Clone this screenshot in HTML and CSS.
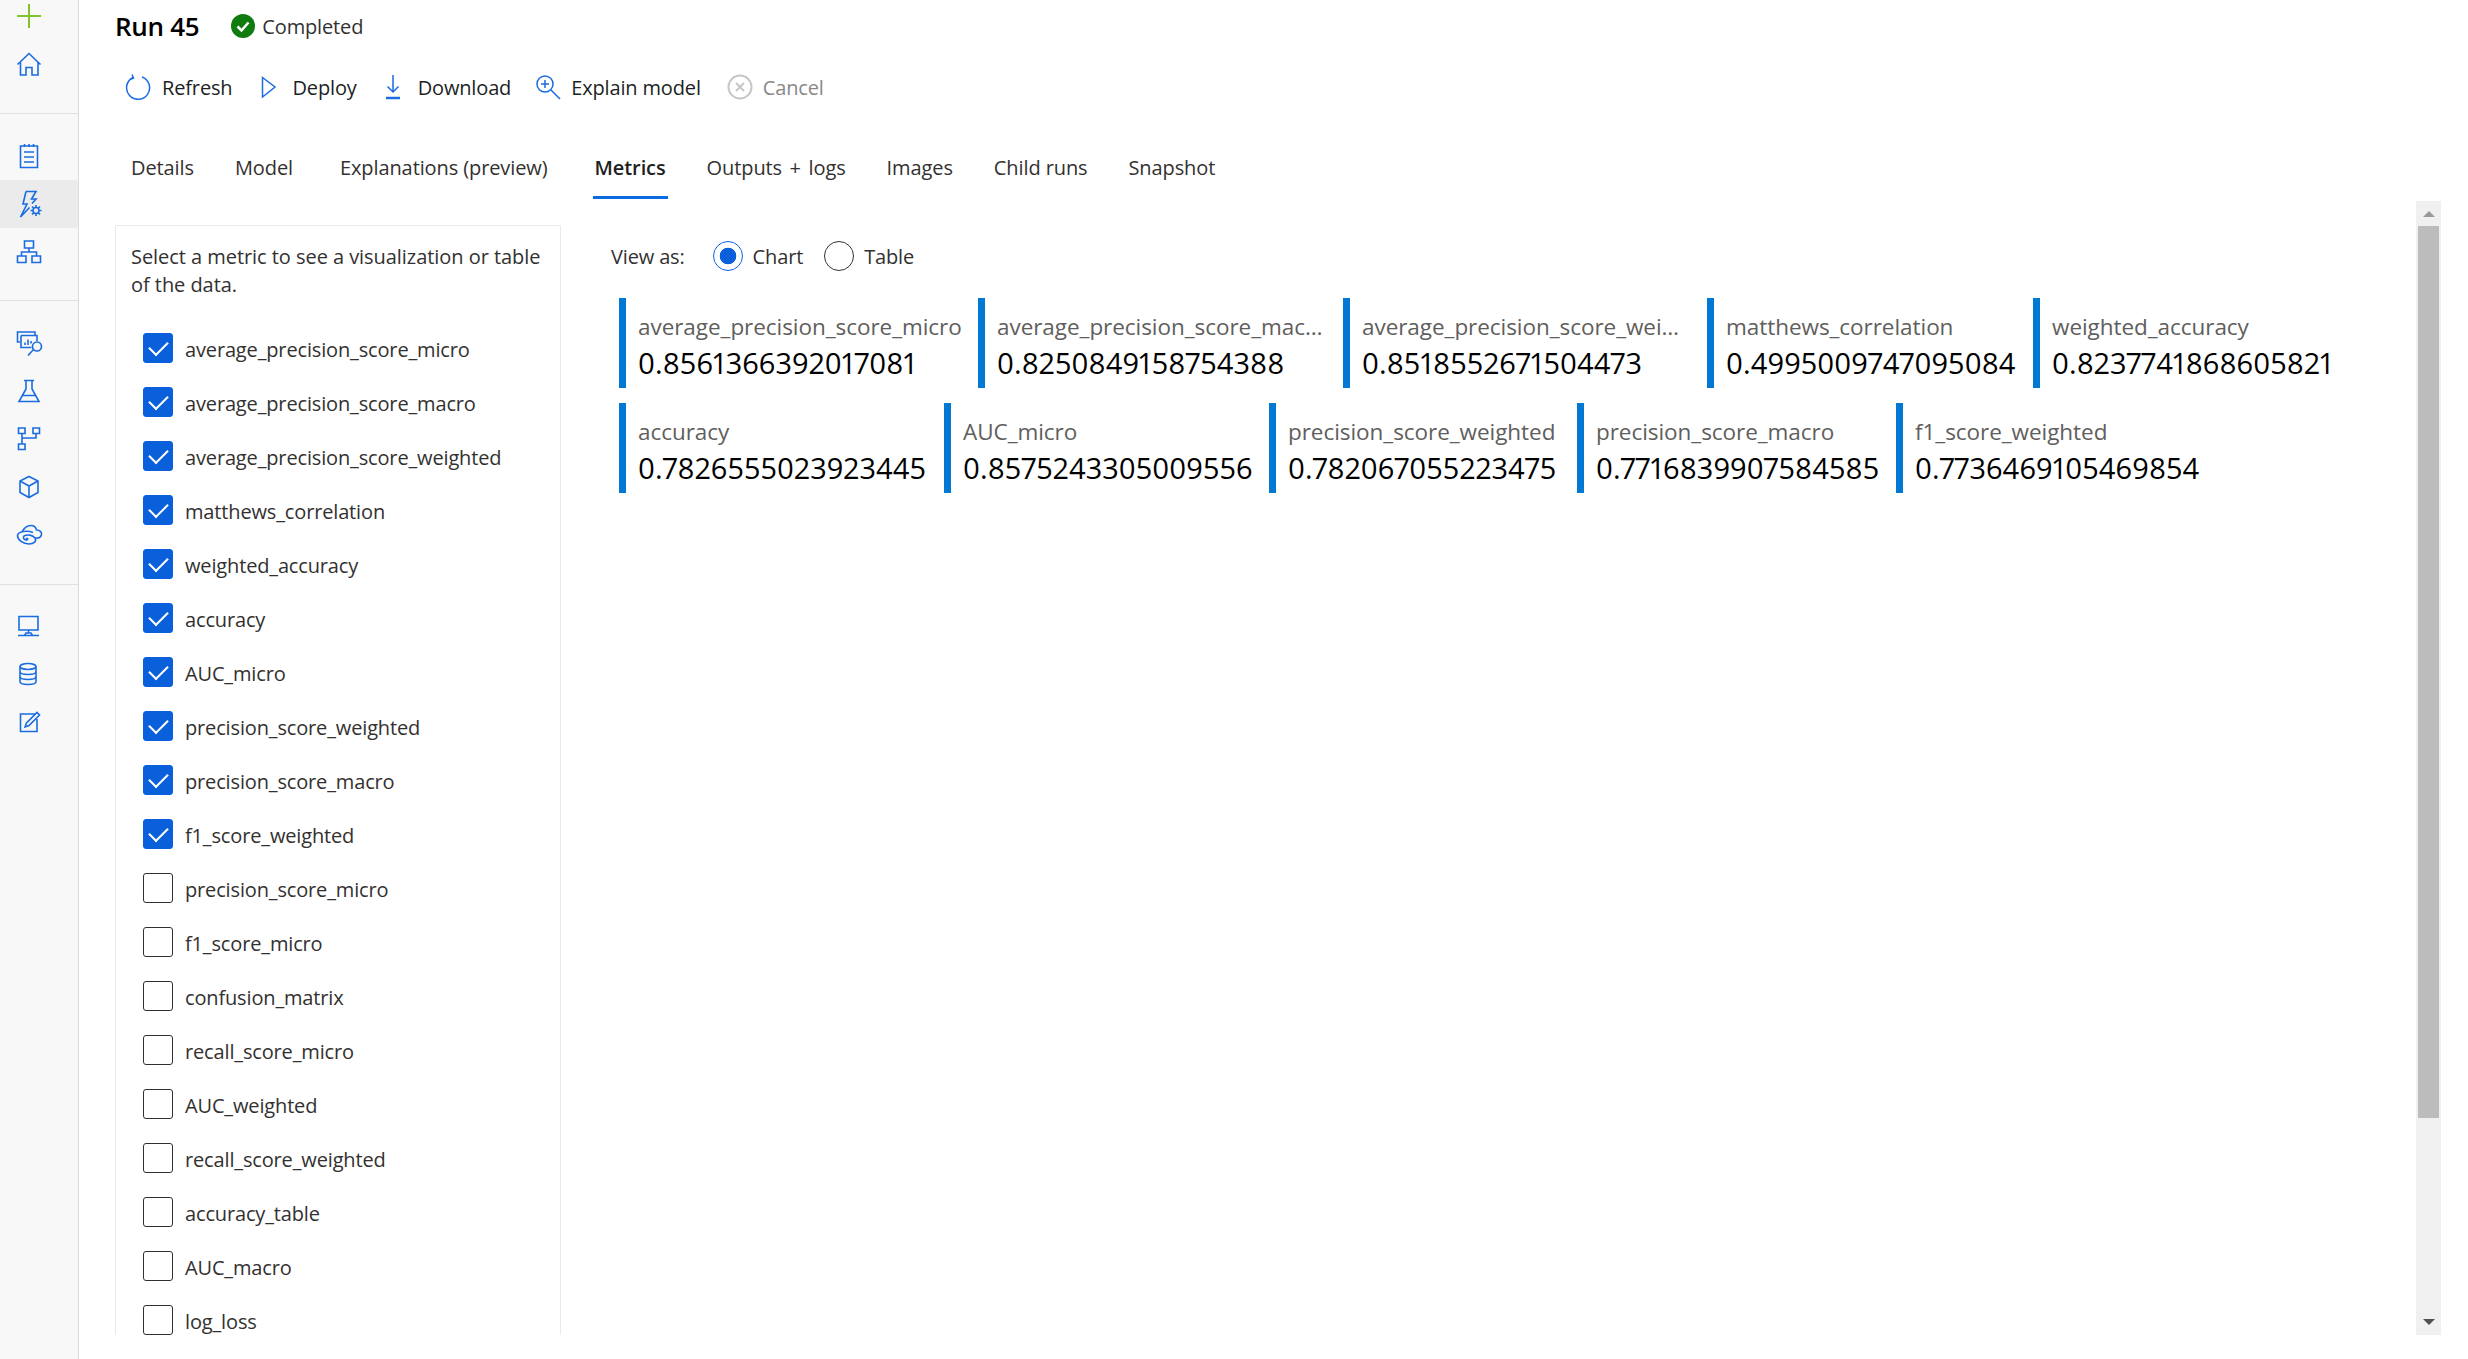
FILE: index.html
```html
<!DOCTYPE html>
<html lang="en">
<head>
    <meta charset="utf-8">
    <title>Run 45</title>
    <link rel="stylesheet" href="styles.css">
</head>
<body>
    <aside class="sidebar">
        <div class="nav-group nav-first">
            <div class="nav-item nav-plus">
                <svg class="icon plus" viewBox="0 0 32 32"><path d="M16 4V28M4 16H28"/></svg>
            </div>
            <div class="nav-item">
                <svg class="icon" viewBox="0 0 32 32"><path d="M4.5 15.5L16 4.5L27.5 15.5M7.5 13.5V26H13V18.5H19V26H25V13.5"/></svg>
            </div>
        </div>
        <div class="nav-group">
            <div class="nav-item">
                <svg class="icon" viewBox="0 0 32 32"><path d="M7.5 6H24.5V27.5H7.5ZM11.5 4V7M16 4V7M20.5 4V7M11 12H21M11 17H21M11 22H21"/></svg>
            </div>
            <div class="nav-item selected">
                <svg class="icon" viewBox="0 0 32 32"><path d="M13 3.5H23L18.5 11H23L19 15.5M13 3.5L10 16H14L7.5 29L16.5 19.5"/><circle cx="23" cy="22.5" r="3"/><path d="M23 17V19.5M23 25.5V28M17.5 22.5H20M26 22.5H28.5M19 18.5L20.8 20.3M25.2 24.7L27 26.5M27 18.5L25.2 20.3M20.8 24.7L19 26.5"/></svg>
            </div>
            <div class="nav-item">
                <svg class="icon" viewBox="0 0 32 32"><path d="M11.5 5H20.5V12H11.5ZM4.5 20H13V26.5H4.5ZM19 20H27.5V26.5H19ZM16 12V16M8.5 20V16H23.5V20"/></svg>
            </div>
        </div>
        <div class="nav-group nav-tools">
            <div class="nav-item">
                <svg class="icon" viewBox="0 0 32 32"><path d="M7 15H4.5V5H22V8.5M8 8.5H24V14M8 8.5V20.5H18.5"/><path d="M12 15.5V18M15 12.5V18M18 14V16.5"/><circle cx="24" cy="19.5" r="4.5"/><path d="M20.5 22.5L15 28.5"/></svg>
            </div>
            <div class="nav-item">
                <svg class="icon" viewBox="0 0 32 32"><path d="M11 5.5H21M13 5.5V14L6 26.5H26L19 14V5.5M9 20.5H23"/></svg>
            </div>
            <div class="nav-item">
                <svg class="icon" viewBox="0 0 32 32"><path d="M5.5 5H12V10.5H5.5ZM20 5H26.5V10.5H20ZM5.5 21H12V26.5H5.5ZM9 10.5V21M9 15H23V10.5"/></svg>
            </div>
            <div class="nav-item">
                <svg class="icon" viewBox="0 0 32 32"><path d="M16 5.5L25 10V21.5L16 26.5L7 21.5V10ZM7 10L16 15L25 10M16 15V26.5"/></svg>
            </div>
            <div class="nav-item">
                <svg class="icon" viewBox="0 0 32 32"><path d="M9 13C11 9 14 6.5 18 6.5C21 6.5 23 9 23.5 11C27 11 29 13 28.5 15.5C28 18 26 19 24 19H22"/><path d="M20 13.5C14 11 5 12.5 4.5 16.5C4.5 21 10 25 16 25C21 25 24 22 22 19C20 16 14 15 11 17C9.5 19 11 21 14 21"/><circle class="dot" cx="14" cy="20" r="1.5"/></svg>
            </div>
        </div>
        <div class="nav-group nav-last">
            <div class="nav-item">
                <svg class="icon" viewBox="0 0 32 32"><path d="M6 6.5H25V20H6ZM15.5 20V23M5 25.5H26M11.5 25.5L13 23H18L19.5 25.5"/></svg>
            </div>
            <div class="nav-item">
                <svg class="icon" viewBox="0 0 32 32"><ellipse cx="15" cy="8.5" rx="8" ry="3"/><path d="M7 8.5V23.5C7 25.5 11 26.5 15 26.5C19 26.5 23 25.5 23 23.5V8.5M7 13.5C7 15.5 11 16.5 15 16.5C19 16.5 23 15.5 23 13.5M7 18.5C7 20.5 11 21.5 15 21.5C19 21.5 23 20.5 23 18.5"/></svg>
            </div>
            <div class="nav-item">
                <svg class="icon" viewBox="0 0 32 32"><path d="M22 8H7.5V25.5H24V13"/><path d="M12 21L13.5 17L24 6.5L26.5 9L16 19.5Z"/></svg>
            </div>
        </div>
    </aside>

    <main class="main">
        <header class="title-row">
            <h1>Run 45</h1>
            <div class="status">
                <svg class="status-icon" viewBox="0 0 24 24"><circle cx="12" cy="12" r="12"/><path d="M6.5 12.5L10.5 16.5L17.5 8.5"/></svg>
                <span>Completed</span>
            </div>
        </header>

        <div class="toolbar">
            <button class="tool refresh">
                <svg class="tool-icon" viewBox="0 0 26 26"><path d="M8 3.5A11.5 11.5 0 1 0 17 3M7 0.5L8.5 4L5 5.5"/></svg>
                Refresh
            </button>
            <button class="tool deploy">
                <svg class="tool-icon" viewBox="0 0 26 26"><path d="M6.5 3.5L19 13L6.5 23Z"/></svg>
                Deploy
            </button>
            <button class="tool download">
                <svg class="tool-icon" viewBox="0 0 26 26"><path d="M13 1V18M7.5 12.5L13 18L18.5 12.5"/><path class="thick" d="M6 24H20"/></svg>
                Download
            </button>
            <button class="tool explain">
                <svg class="tool-icon" viewBox="0 0 26 26"><circle cx="10" cy="10" r="8"/><path d="M16 16L25 25M10 6V14M6 10H14"/></svg>
                Explain model
            </button>
            <button class="tool cancel">
                <svg class="tool-icon" viewBox="0 0 26 26"><circle cx="13" cy="13" r="11.5"/><path d="M9 9L17 17M17 9L9 17"/></svg>
                Cancel
            </button>
        </div>

        <nav class="tabs">
            <a class="tab">Details</a>
            <a class="tab">Model</a>
            <a class="tab tab-wide">Explanations (preview)</a>
            <a class="tab active">Metrics</a>
            <a class="tab tab-logs">Outputs + logs</a>
            <a class="tab">Images</a>
            <a class="tab">Child runs</a>
            <a class="tab">Snapshot</a>
        </nav>

        <section class="content">
            <div class="panel">
                <p class="panel-text">Select a metric to see a visualization or table of the data.</p>
                <ul class="metric-list">
                    <li><span class="checkbox checked"></span><span class="metric-name">average_precision_score_micro</span></li>
                    <li><span class="checkbox checked"></span><span class="metric-name">average_precision_score_macro</span></li>
                    <li><span class="checkbox checked"></span><span class="metric-name">average_precision_score_weighted</span></li>
                    <li><span class="checkbox checked"></span><span class="metric-name">matthews_correlation</span></li>
                    <li><span class="checkbox checked"></span><span class="metric-name">weighted_accuracy</span></li>
                    <li><span class="checkbox checked"></span><span class="metric-name">accuracy</span></li>
                    <li><span class="checkbox checked"></span><span class="metric-name">AUC_micro</span></li>
                    <li><span class="checkbox checked"></span><span class="metric-name">precision_score_weighted</span></li>
                    <li><span class="checkbox checked"></span><span class="metric-name">precision_score_macro</span></li>
                    <li><span class="checkbox checked"></span><span class="metric-name">f1_score_weighted</span></li>
                    <li><span class="checkbox"></span><span class="metric-name">precision_score_micro</span></li>
                    <li><span class="checkbox"></span><span class="metric-name">f1_score_micro</span></li>
                    <li><span class="checkbox"></span><span class="metric-name">confusion_matrix</span></li>
                    <li><span class="checkbox"></span><span class="metric-name">recall_score_micro</span></li>
                    <li><span class="checkbox"></span><span class="metric-name">AUC_weighted</span></li>
                    <li><span class="checkbox"></span><span class="metric-name">recall_score_weighted</span></li>
                    <li><span class="checkbox"></span><span class="metric-name">accuracy_table</span></li>
                    <li><span class="checkbox"></span><span class="metric-name">AUC_macro</span></li>
                    <li><span class="checkbox"></span><span class="metric-name">log_loss</span></li>
                </ul>
            </div>

            <div class="charts">
                <div class="view-as">
                    <span class="view-label">View as:</span>
                    <span class="radio on"></span><span class="radio-text">Chart</span>
                    <span class="radio"></span><span class="radio-text">Table</span>
                </div>
                <div class="cards">
                    <div class="card"><div class="card-name">average_precision_score_micro</div><div class="card-value">0.8561366392017081</div></div>
                    <div class="card"><div class="card-name">average_precision_score_macro</div><div class="card-value">0.8250849158754388</div></div>
                    <div class="card"><div class="card-name">average_precision_score_weighted</div><div class="card-value">0.8518552671504473</div></div>
                    <div class="card"><div class="card-name">matthews_correlation</div><div class="card-value">0.4995009747095084</div></div>
                    <div class="card"><div class="card-name">weighted_accuracy</div><div class="card-value">0.8237741868605821</div></div>
                    <div class="card"><div class="card-name">accuracy</div><div class="card-value">0.7826555023923445</div></div>
                    <div class="card"><div class="card-name">AUC_micro</div><div class="card-value">0.8575243305009556</div></div>
                    <div class="card"><div class="card-name">precision_score_weighted</div><div class="card-value">0.782067055223475</div></div>
                    <div class="card"><div class="card-name">precision_score_macro</div><div class="card-value">0.7716839907584585</div></div>
                    <div class="card"><div class="card-name">f1_score_weighted</div><div class="card-value">0.7736469105469854</div></div>
                </div>
            </div>

            <div class="scrollbar">
                <span class="arrow-up"></span>
                <span class="thumb"></span>
                <span class="arrow-down"></span>
            </div>
        </section>
    </main>
</body>
</html>
```

FILE: styles.css
```css
* {
    box-sizing: border-box;
}

html,
body {
    height: 100%;
    margin: 0;
    overflow: hidden;
}

body {
    display: flex;
    font-family: "Open Sans", "Liberation Sans", sans-serif;
    font-size: 20px;
    letter-spacing: -0.15px;
    color: #323130;
    background-color: white;
}

/* left nav */
.sidebar {
    flex: 0 0 79px;
    background-color: #f8f8f8;
    border-right: 1px solid #dcdcdc;
}

.nav-group {
    padding: 18px 0 24px;
    border-bottom: 1px solid #e1e1e1;
}

.nav-first {
    padding-top: 0;
}

.nav-tools {
    padding: 18px 0 25px;
}

.nav-last {
    padding: 17px 0 0;
    border-bottom: none;
}

.nav-item {
    display: flex;
    align-items: center;
    height: 48px;
    padding-left: 13px;
}

.nav-plus {
    height: 32px;
    margin-bottom: 9px;
}

.selected {
    background-color: #ebebeb;
    border-radius: 0 3px 3px 0;
}

.icon {
    width: 32px;
    height: 32px;
    fill: none;
    stroke: #1a6ce0;
    stroke-width: 1.6;
}

.plus {
    stroke: #7fc52b;
    stroke-width: 2;
}

.dot {
    fill: #1a6ce0;
    stroke: none;
}

/* top of page */
.main {
    flex: 1;
    min-width: 0;
    display: flex;
    flex-direction: column;
    padding-left: 36px;
}

.title-row {
    display: flex;
    align-items: center;
    height: 52px;
}

h1 {
    margin: 0 32px 0 0;
    font-size: 26px;
    font-weight: 600;
    letter-spacing: -0.3px;
    color: black;
}

.status {
    display: flex;
    align-items: center;
    gap: 7px;
}

.status-icon {
    width: 24px;
    height: 24px;
    fill: #107c10;
}

.status-icon path {
    fill: none;
    stroke: white;
    stroke-width: 2.5;
}

.toolbar {
    display: flex;
    align-items: center;
    height: 70px;
    padding-left: 10px;
}

.tool {
    display: flex;
    align-items: center;
    gap: 10px;
    padding: 0;
    border: none;
    background: none;
    font: inherit;
    letter-spacing: inherit;
    color: #201f1e;
}

.refresh {
    gap: 11px;
    margin-right: 24px;
}

.deploy {
    margin-right: 23px;
}

.download {
    gap: 12px;
    margin-right: 24px;
}

.explain {
    margin-right: 26px;
}

.tool-icon {
    width: 26px;
    height: 26px;
    fill: none;
    stroke: #1a6ce0;
    stroke-width: 1.5;
}

.thick {
    stroke-width: 2.5;
}

.cancel {
    color: #8a8886;
}

.cancel .tool-icon {
    stroke: #c8c6c4;
    stroke-width: 2;
}

.tabs {
    display: flex;
    gap: 41px;
    height: 79px;
    padding: 24px 0 0 16px;
    letter-spacing: -0.1px;
}

.tab {
    height: 53px;
    padding-top: 8px;
    color: #323130;
}

.tab-wide {
    margin: 0 6px;
}

.tab-logs {
    word-spacing: 2.5px;
}

.active {
    font-weight: 600;
    color: #201f1e;
    border-bottom: 3px solid #0a6adf;
    margin: 0 -2px;
    padding: 8px 2px 0;
}

/* metric picker + cards */
.content {
    flex: 1;
    display: flex;
    min-height: 0;
    margin-bottom: 24px;
    margin-right: 27px;
}

.panel {
    flex: 0 0 446px;
    margin-top: 24px;
    padding: 17px 0 0 15px;
    border: 1px solid #eaeaea;
    border-bottom: none;
    overflow: hidden;
}

.panel-text {
    margin: 0 0 34px;
    width: 420px;
    line-height: 28px;
    letter-spacing: -0.05px;
}

.metric-list {
    margin: 0;
    padding: 0 0 0 12px;
    list-style: none;
}

.metric-list li {
    display: flex;
    align-items: center;
    gap: 12px;
    height: 30px;
    margin-bottom: 24px;
    white-space: nowrap;
}

.metric-name {
    padding-top: 3px;
}

.checkbox {
    flex: none;
    position: relative;
    width: 30px;
    height: 30px;
    border: 1.5px solid #323130;
    border-radius: 3px;
}

.checked {
    background-color: #0a60db;
    border-color: #0a60db;
}

.checked::after {
    content: "";
    position: absolute;
    left: 9px;
    top: 3px;
    width: 9px;
    height: 16px;
    border-right: 2px solid white;
    border-bottom: 2px solid white;
    transform: rotate(45deg);
}

.charts {
    flex: 1;
    min-width: 0;
    padding: 40px 0 0 50px;
}

.view-as {
    display: flex;
    align-items: center;
    height: 30px;
    margin-bottom: 27px;
}

.view-label {
    margin-right: 28px;
}

.radio {
    width: 30px;
    height: 30px;
    margin-right: 10px;
    border: 1.5px solid #323130;
    border-radius: 50%;
}

.radio.on {
    border-color: #0a60db;
    background: radial-gradient(circle, #0a60db 8px, white 8.6px);
}

.radio-text {
    margin-right: 21px;
}

.cards {
    display: flex;
    flex-wrap: wrap;
    gap: 15px 0;
    margin-left: 8px;
}

.card {
    display: flex;
    flex-direction: column;
    justify-content: center;
    gap: 3px;
    height: 90px;
    max-width: 365px;
    padding: 6px 18px 0 12px;
    border-left: 7px solid #0078d4;
}

.card:nth-child(1) { width: 359px; padding-right: 14px; }
.card:nth-child(2) { width: 365px; }
.card:nth-child(3) { width: 364px; }
.card:nth-child(4) { width: 326px; padding-right: 14px; }
.card:nth-child(6) { width: 325px; padding-right: 14px; }
.card:nth-child(7) { width: 325px; padding-right: 14px; }
.card:nth-child(8) { width: 308px; padding-right: 14px; }
.card:nth-child(9) { width: 319px; padding-right: 14px; }

.card-name {
    overflow: hidden;
    white-space: nowrap;
    text-overflow: ellipsis;
    font-size: 22.5px;
    line-height: 30px;
    letter-spacing: -0.05px;
    color: #605e5c;
}

.card-value {
    font-size: 29px;
    font-variant-numeric: proportional-nums;
    line-height: 36px;
    letter-spacing: 0.1px;
    color: black;
    white-space: nowrap;
}

.scrollbar {
    flex: 0 0 25px;
    display: flex;
    flex-direction: column;
    align-items: center;
    background-color: #f0f0f0;
}

.thumb {
    width: 21px;
    height: 892px;
    background-color: #bcbcbc;
}

.arrow-up,
.arrow-down {
    width: 0;
    height: 0;
    border-left: 6px solid transparent;
    border-right: 6px solid transparent;
}

.arrow-up {
    margin: 10px 0 9px;
    border-bottom: 6px solid #999999;
}

.arrow-down {
    margin-top: 201px;
    border-top: 6px solid #505050;
}
```
